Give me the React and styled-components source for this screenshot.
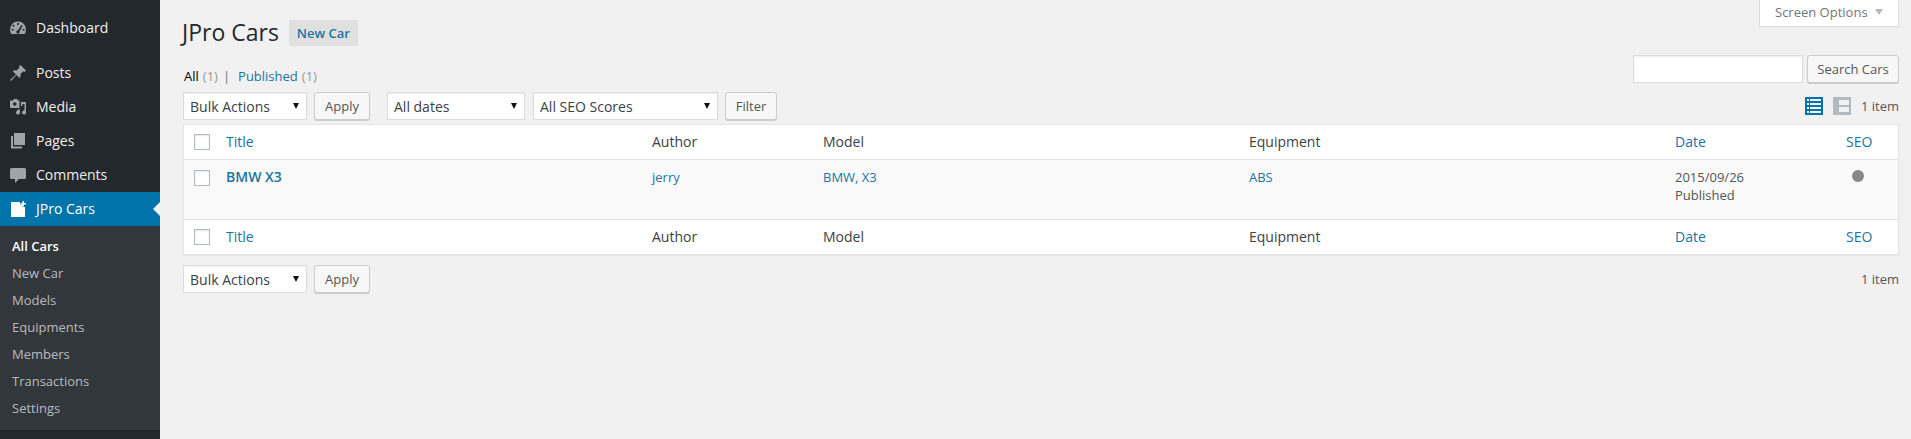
import React from 'react';
import styled, {createGlobalStyle} from 'styled-components';

const FONT = `"Open Sans", "Liberation Sans", sans-serif`;
const BLUE = '#1a74a3';
const TEXT = '#3c4145';

const GlobalStyle = createGlobalStyle`
  html, body {
    margin: 0;
    padding: 0;
    height: 100%;
    background: #f1f1f1;
  }
  #root {
    height: 100%;
  }
  * {
    box-sizing: border-box;
  }
`;

const Page = styled.div`
  display: flex;
  width: 100%;
  height: 439px;
  overflow: hidden;
  font-family: ${FONT};
  font-size: 13px;
  color: #444;
  background: #f1f1f1;
`;

const Sidebar = styled.nav`
  flex: 0 0 160px;
  background: #23282d;
  padding-top: 11px;
`;

const MenuItem = styled.a`
  position: relative;
  display: flex;
  align-items: center;
  height: 34px;
  padding: 0 0 2px 10px;
  gap: 10px;
  font-size: 14px;
  color: ${p => (p.$active ? '#fff' : '#eee')};
  background: ${p => (p.$active ? '#0073aa' : 'transparent')};
  margin-top: ${p => p.$gap || 0}px;

  svg {
    flex: 0 0 16px;
    margin-top: 2px;
    fill: ${p => (p.$active ? '#fff' : '#9ea3a8')};
  }
`;

const ActiveArrow = styled.span`
  position: absolute;
  right: 0;
  top: 10px;
  border: 7px solid transparent;
  border-left-width: 0;
  border-right-color: #f1f1f1;
`;

const SubMenu = styled.div`
  background: #32373c;
  padding: 7px 0 9px;
  height: 204px;
`;

const SubItem = styled.a`
  display: flex;
  align-items: center;
  height: 27px;
  padding: 0 0 2px 12px;
  font-size: 13px;
  color: ${p => (p.$current ? '#fff' : 'rgba(240, 245, 250, 0.7)')};
  font-weight: ${p => (p.$current ? 600 : 400)};
`;

const Main = styled.main`
  position: relative;
  flex: 1;
  padding: 0 12px 0 23px;
  min-width: 0;
`;

const ScreenOptions = styled.div`
  position: absolute;
  top: 0;
  right: 12px;
  display: flex;
  align-items: center;
  gap: 7px;
  width: 140px;
  height: 27px;
  padding: 0 0 2px 15px;
  background: #fff;
  border: 1px solid #ddd;
  border-top: none;
  box-shadow: 0 1px 1px rgba(0, 0, 0, 0.04);
  color: #72777c;
`;

const CaretDown = styled.span`
  border: 4px solid transparent;
  border-top: 6px solid #b4b9be;
  border-bottom-width: 0;
`;

const TitleRow = styled.div`
  display: flex;
  align-items: center;
  gap: 9px;
  height: 26px;
  margin-top: 20px;
  margin-left: -1px;
`;

const Heading = styled.h1`
  margin: 0;
  font-size: 23px;
  font-weight: 400;
  line-height: 26px;
  color: #23282d;
  position: relative;
  top: -1px;
`;

const AddNew = styled.a`
  display: flex;
  align-items: center;
  height: 26px;
  padding: 0 8px;
  margin-left: 1px;
  font-size: 13px;
  font-weight: 600;
  color: ${BLUE};
  background: #e0e0e0;
  border-radius: 2px;
`;

const TopArea = styled.div`
  display: flex;
  justify-content: space-between;
  height: 37px;
  margin-top: 9px;
`;

const Views = styled.div`
  display: flex;
  align-items: center;
  height: 28px;
  gap: 4px;
  margin: 7px 0 0 1px;
  color: #72777c;
`;

const ViewLink = styled.a`
  color: ${p => (p.$current ? '#000' : BLUE)};
`;

const Count = styled.span`
  color: #999;
`;

const Separator = styled.span`
  color: #72777c;
  margin: 0 4px 0 1px;
`;

const SearchBox = styled.div`
  display: flex;
  gap: 4px;
  height: 28px;
`;

const SearchInput = styled.input`
  width: 170px;
  height: 28px;
  background: #fff;
  border: 1px solid #ddd;
  box-shadow: inset 0 1px 2px rgba(0, 0, 0, 0.07);
`;

const Button = styled.button`
  height: 28px;
  padding: 0 0 1px;
  font-family: ${FONT};
  font-size: 13px;
  white-space: nowrap;
  color: #555;
  background: #f7f7f7;
  border: 1px solid #ccc;
  border-radius: 3px;
  box-shadow: 0 1px 0 #ccc;
  width: ${p => p.$width}px;
  margin-left: ${p => p.$offset || 0}px;
`;

const Toolbar = styled.div`
  display: flex;
  align-items: center;
  height: 28px;
  margin-top: ${p => p.$top || 0}px;
`;

const FakeSelect = styled.div`
  position: relative;
  display: flex;
  align-items: center;
  width: ${p => p.$width}px;
  height: 28px;
  padding-left: 6px;
  margin-left: ${p => p.$offset || 0}px;
  font-size: 14px;
  color: ${TEXT};
  background: #fff;
  border: 1px solid #ddd;
  box-shadow: inset 0 1px 2px rgba(0, 0, 0, 0.07);

  &::after {
    content: '';
    position: absolute;
    right: 7px;
    top: 10px;
    border: 3.5px solid transparent;
    border-top: 6px solid #111;
    border-bottom-width: 0;
  }
`;

const Pagination = styled.div`
  display: flex;
  align-items: center;
  gap: 10px;
  margin-left: auto;
  color: #555;
`;

const ModeIcon = styled.svg`
  width: 18px;
  height: 18px;
  display: block;
  fill: ${p => (p.$current ? '#0073aa' : '#b4b9be')};
`;

const ModeSwitch = styled.div`
  display: flex;
  gap: 10px;
`;

const Table = styled.table`
  width: 100%;
  margin-top: 4px;
  table-layout: fixed;
  border-collapse: separate;
  border-spacing: 0;
  background: #fff;
  border: 1px solid #e5e5e5;
  box-shadow: 0 1px 1px rgba(0, 0, 0, 0.04);
`;

const HeadCell = styled.th`
  height: 35px;
  padding: 0 10px 2px;
  font-size: 14px;
  font-weight: 400;
  text-align: left;
  color: ${p => (p.$link ? BLUE : TEXT)};
  border-bottom: ${p => (p.$top ? '1px solid #e1e1e1' : 'none')};
  border-top: ${p => (p.$top ? 'none' : '1px solid #e1e1e1')};
`;

const BodyRow = styled.tr`
  background: #f9f9f9;
`;

const BodyCell = styled.td`
  height: 59px;
  padding: 8px 10px;
  vertical-align: top;
  font-size: 13px;
  line-height: 18px;
  color: ${p => (p.$link ? BLUE : '#555')};
`;

const CheckCell = styled.td`
  padding: 10px 0 0 10px;
  vertical-align: top;
`;

const CheckHead = styled.th`
  padding: 0 0 0 10px;
  border-bottom: ${p => (p.$top ? '1px solid #e1e1e1' : 'none')};
  border-top: ${p => (p.$top ? 'none' : '1px solid #e1e1e1')};
`;

const CheckBox = styled.span`
  display: block;
  width: 16px;
  height: 16px;
  background: #fff;
  border: 1px solid #b4b9be;
  box-shadow: inset 0 1px 2px rgba(0, 0, 0, 0.1);
`;

const RowTitle = styled.a`
  font-size: 14px;
  font-weight: 600;
  color: ${BLUE};
`;

const ScoreDot = styled.span`
  display: block;
  width: 12px;
  height: 12px;
  margin: 2px 0 0 6px;
  border-radius: 50%;
  background: #888;
`;

const Col = styled.col`
  width: ${p => p.$width}px;
`;

const Icon = ({children}) => (
  <svg width="16" height="16" viewBox="0 0 16 16">{children}</svg>
);

const DashboardIcon = () => (
  <Icon>
    <path fillRule="evenodd" d="M8 1.500a8 8 0 0 0-8 8c0 1.700.5 3.200 1.400 4.500h13.200A8 8 0 0 0 16 9.500a8 8 0 0 0-8-8zM7.200 3h1.600v2H7.200zM3.200 4.500l1.400 1.400-1.100 1.100-1.400-1.400zM1.500 9h2v1.600h-2zM12.500 9h2v1.600h-2zM11.300 5l1.200.9-3 5.300a1.700 1.700 0 1 1-1.500-.9z" />
  </Icon>
);

const PostsIcon = () => (
  <Icon>
    <path d="M10.400 0L16 5.600l-1.600 1.300-1-.6-3 2.800c.5 1.500.2 3-.8 4L6.400 9.900 1 16l-1-1 6-5.500-3.300-3.200c1-1 2.600-1.300 4-.8l2.800-3-.6-1z" />
  </Icon>
);

const MediaIcon = () => (
  <Icon>
    <path fillRule="evenodd" d="M0 1.500h3l1-1.500h3l1 1.500h1.500V9H0zM4.800 3.200a1.800 1.800 0 1 0 0 3.600 1.800 1.800 0 0 0 0-3.600z" />
    <path d="M11 3h5v10.500a2 2 0 1 1-1.500-1.900V5H12.500v2H11zM7.500 10.500H10v3a2 2 0 1 1-2.500-1.900z" />
  </Icon>
);

const PagesIcon = () => (
  <Icon>
    <path d="M4 0h11v12H4z" />
    <path d="M1 3h2v10.500h9V15.500H1z" />
  </Icon>
);

const CommentsIcon = () => (
  <Icon>
    <path d="M1.500 1h13A1.500 1.500 0 0 1 16 2.500v8a1.500 1.500 0 0 1-1.500 1.500H9l-4 4v-4H1.500A1.500 1.500 0 0 1 0 10.500v-8A1.500 1.500 0 0 1 1.500 1z" />
  </Icon>
);

const CarsIcon = () => (
  <Icon>
    <path d="M1 1h9v2.500h2.500V6H15v10H1z" />
    <path d="M12.500 0h1.500v2H16v1.500h-2v2h-1.500v-2h-2V2h2z" />
  </Icon>
);

const ListModeIcon = () => (
  <ModeIcon $current viewBox="0 0 18 18">
    <path fillRule="evenodd" d="M0 0h18v18H0zM2 2v2h2V2zM5 2v2h11V2zM2 6v2h2V6zM5 6v2h11V6zM2 10v2h2v-2zM5 10v2h11v-2zM2 14v2h2v-2zM5 14v2h11v-2z" />
  </ModeIcon>
);

const ExcerptModeIcon = () => (
  <ModeIcon viewBox="0 0 18 18">
    <path fillRule="evenodd" d="M0 0h18v18H0zM6 3v5h10V3zM6 10v5h10v-5z" />
  </ModeIcon>
);

const menu = [
  {label: 'Posts', icon: <PostsIcon/>, gap: 11},
  {label: 'Media', icon: <MediaIcon/>},
  {label: 'Pages', icon: <PagesIcon/>},
  {label: 'Comments', icon: <CommentsIcon/>},
];

const subMenu = ['New Car', 'Models', 'Equipments', 'Members', 'Transactions', 'Settings'];

const TableHead = ({top}) => (
  <tr>
    <CheckHead $top={top}><CheckBox/></CheckHead>
    <HeadCell $top={top} $link>Title</HeadCell>
    <HeadCell $top={top}>Author</HeadCell>
    <HeadCell $top={top}>Model</HeadCell>
    <HeadCell $top={top}>Equipment</HeadCell>
    <HeadCell $top={top} $link>Date</HeadCell>
    <HeadCell $top={top} $link>SEO</HeadCell>
  </tr>
);

const App = () => {
  return (
    <Page>
      <GlobalStyle/>
      <Sidebar>
        <MenuItem><DashboardIcon/>Dashboard</MenuItem>
        {menu.map(item => (
          <MenuItem key={item.label} $gap={item.gap}>{item.icon}{item.label}</MenuItem>
        ))}
        <MenuItem $active><CarsIcon/>JPro Cars<ActiveArrow/></MenuItem>
        <SubMenu>
          <SubItem $current>All Cars</SubItem>
          {subMenu.map(item => <SubItem key={item}>{item}</SubItem>)}
        </SubMenu>
      </Sidebar>
      <Main>
        <ScreenOptions>Screen Options<CaretDown/></ScreenOptions>
        <TitleRow>
          <Heading>JPro Cars</Heading>
          <AddNew>New Car</AddNew>
        </TitleRow>
        <TopArea>
          <Views>
            <ViewLink $current>All</ViewLink>
            <Count>(1)</Count>
            <Separator>|</Separator>
            <ViewLink>Published</ViewLink>
            <Count>(1)</Count>
          </Views>
          <SearchBox>
            <SearchInput/>
            <Button $width={92}>Search Cars</Button>
          </SearchBox>
        </TopArea>
        <Toolbar>
          <FakeSelect $width={124}>Bulk Actions</FakeSelect>
          <Button $width={56} $offset={7}>Apply</Button>
          <FakeSelect $width={138} $offset={17}>All dates</FakeSelect>
          <FakeSelect $width={185} $offset={8}>All SEO Scores</FakeSelect>
          <Button $width={52} $offset={7}>Filter</Button>
          <Pagination>
            <ModeSwitch><ListModeIcon/><ExcerptModeIcon/></ModeSwitch>
            1 item
          </Pagination>
        </Toolbar>
        <Table>
          <colgroup>
            <Col $width={32}/>
            <Col $width={426}/>
            <Col $width={171}/>
            <Col $width={426}/>
            <Col $width={426}/>
            <Col $width={171}/>
            <Col $width={62}/>
          </colgroup>
          <thead><TableHead top/></thead>
          <tbody>
            <BodyRow>
              <CheckCell><CheckBox/></CheckCell>
              <BodyCell><RowTitle>BMW X3</RowTitle></BodyCell>
              <BodyCell $link>jerry</BodyCell>
              <BodyCell $link>BMW, X3</BodyCell>
              <BodyCell $link>ABS</BodyCell>
              <BodyCell>2015/09/26<br/>Published</BodyCell>
              <BodyCell><ScoreDot/></BodyCell>
            </BodyRow>
          </tbody>
          <tfoot><TableHead/></tfoot>
        </Table>
        <Toolbar $top={10}>
          <FakeSelect $width={124}>Bulk Actions</FakeSelect>
          <Button $width={56} $offset={7}>Apply</Button>
          <Pagination>1 item</Pagination>
        </Toolbar>
      </Main>
    </Page>
  );
};

export default App;
